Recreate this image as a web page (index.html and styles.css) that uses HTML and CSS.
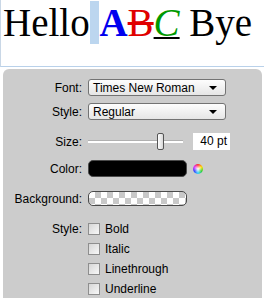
FILE: index.html
```html
<!DOCTYPE html>
<html lang="en">
<head>
    <meta charset="UTF-8">
    <title>Text Style</title>
    <link rel="stylesheet" href="styles.css">
</head>
<body>

    <!-- Preview -->
    <div class="editor">Hello<span class="sel"> </span><span class="t-bold">A</span><span class="t-strike">B</span><span class="t-under">C</span> Bye</div>

    <!-- Inspector panel -->
    <div class="panel">
        <div class="row row-font">
            <span class="label">Font:</span>
            <div class="select"><span>Times New Roman</span><i class="arrow"></i></div>
        </div>
        <div class="row row-style">
            <span class="label">Style:</span>
            <div class="select"><span>Regular</span><i class="arrow"></i></div>
        </div>
        <div class="row row-size">
            <span class="label">Size:</span>
            <div class="slider"><div class="track"></div><div class="thumb"></div></div>
            <div class="size-input">40 pt</div>
        </div>
        <div class="row row-color">
            <span class="label">Color:</span>
            <div class="swatch swatch-black"></div>
            <div class="wheel"></div>
        </div>
        <div class="row row-bg">
            <span class="label">Background:</span>
            <div class="swatch swatch-clear"></div>
        </div>
        <div class="row row-checks">
            <span class="label">Style:</span>
            <div class="checks">
                <div class="check"><span class="box"></span>Bold</div>
                <div class="check"><span class="box"></span>Italic</div>
                <div class="check"><span class="box"></span>Linethrough</div>
                <div class="check"><span class="box"></span>Underline</div>
            </div>
        </div>
    </div>

</body>
</html>
```

FILE: styles.css
```css
/* General */
body {
    margin: 0;
    padding: 0;
    background-color: #ffffff;
    font-family: "Liberation Sans", Arial, sans-serif;
    font-size: 12px;
    color: #000;
    overflow: hidden;
}

/* Preview text */
.editor {
    width: 261px;
    height: 66px;
    border-left: 1px solid #c9d7e6;
    border-bottom: 1px solid #b9d1ea;
    padding-left: 2px;
    font-family: "Liberation Serif", "Times New Roman", serif;
    font-size: 39px;
    line-height: 46px;
    white-space: pre;
}

.sel {
    background-color: #bcd6ef;
}

.t-bold {
    font-weight: bold;
    color: #0000ee;
}

.t-strike {
    color: #e00000;
    text-decoration: line-through;
}

.t-under {
    font-style: italic;
    color: #009900;
    text-decoration: underline;
    text-decoration-color: #000;
    text-decoration-thickness: 2px;
}

/* Panel */
.panel {
    margin: 2px 0 0 3px;
    width: 259px;
    height: 240px;
    background-color: #cccccc;
    border-radius: 6px 6px 0 0;
    padding-top: 10px;
    box-sizing: border-box;
}

.row {
    display: flex;
    align-items: center;
    height: 17px;
}

.row-style { margin-top: 7px; }
.row-size { margin-top: 13px; }
.row-color { margin-top: 10px; }
.row-bg { margin-top: 14px; height: 15px; }
.row-checks {
    margin-top: 13px;
    align-items: flex-start;
    height: auto;
}

.label {
    width: 79px;
    margin-right: 6px;
    text-align: right;
    flex-shrink: 0;
}

.row-checks .label {
    line-height: 20px;
}

/* Popup buttons */
.select {
    width: 138px;
    height: 17px;
    box-sizing: border-box;
    display: flex;
    align-items: center;
    justify-content: space-between;
    padding: 0 8px 0 4px;
    border: 1px solid #737373;
    border-radius: 3px;
    background: linear-gradient(#fdfdfd, #e6e6e6);
    font-size: 12px;
}

.arrow {
    width: 0;
    height: 0;
    border-left: 4px solid transparent;
    border-right: 4px solid transparent;
    border-top: 4px solid #000;
}

/* Size slider */
.slider {
    position: relative;
    width: 95px;
    height: 17px;
}

.track {
    margin-top: 7px;
    height: 2px;
    background-color: #ffffff;
    border-top: 1px solid #b0b0b0;
}

.thumb {
    position: absolute;
    top: 0;
    left: 69px;
    width: 5px;
    height: 15px;
    border: 1px solid #555;
    border-radius: 2px;
    background: linear-gradient(90deg, #ffffff, #d8d8d8);
}

.size-input {
    margin-left: 10px;
    width: 37px;
    height: 17px;
    box-sizing: border-box;
    padding-right: 3px;
    background-color: #ffffff;
    text-align: right;
    line-height: 17px;
}

/* Colour wells */
.swatch {
    width: 99px;
    box-sizing: border-box;
    border: 1px solid #4a4a4a;
    border-radius: 5px;
}

.swatch-black {
    height: 17px;
    background-color: #000;
}

.swatch-clear {
    height: 15px;
    background: repeating-conic-gradient(#c8c8c8 0 25%, #ffffff 0 50%) 0 0 / 12px 12px;
}

.wheel {
    margin-left: 6px;
    width: 10px;
    height: 10px;
    border-radius: 50%;
    background:
        radial-gradient(circle, #ffffff 0, rgba(255, 255, 255, 0.6) 25%, rgba(255, 255, 255, 0) 60%),
        conic-gradient(#ff3030, #ffe000, #30d030, #30d0ff, #3040ff, #e030ff, #ff3030);
}

/* Checkboxes */
.checks {
    display: flex;
    flex-direction: column;
}

.check {
    display: flex;
    align-items: center;
    height: 20px;
}

.box {
    width: 12px;
    height: 12px;
    box-sizing: border-box;
    margin-right: 5px;
    border: 1px solid #8e8e8e;
    background: linear-gradient(135deg, #d6d6d6, #f8f8f8);
}
```
